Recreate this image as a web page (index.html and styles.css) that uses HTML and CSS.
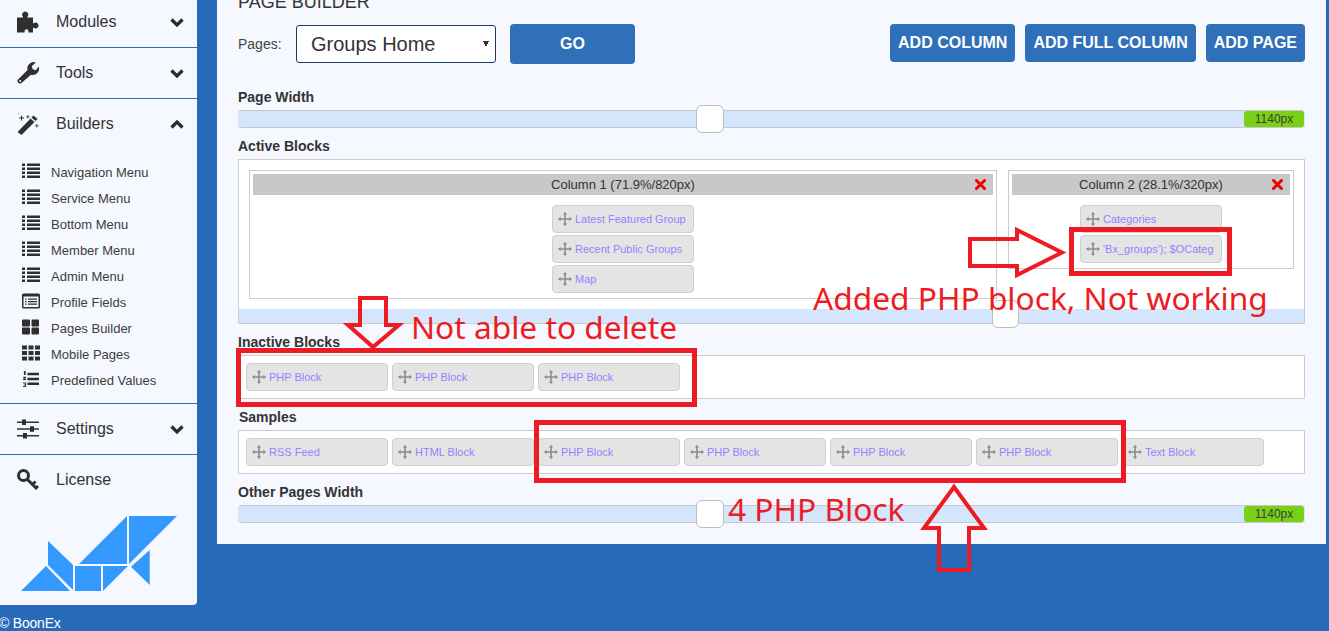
FILE: index.html
```html
<!DOCTYPE html>
<html lang="en">
<head>
  <meta charset="UTF-8" />
  <title>Page Builder</title>
  <link rel="stylesheet" href="styles.css">
</head>
<body>

  <svg class="defs" xmlns="http://www.w3.org/2000/svg">
    <symbol id="i-puzzle" viewBox="0 0 22 21">
      <path d="M0 6h6V5.200a3 3 0 1 1 4.400 0V6H16v5.800h.9a2.800 2.800 0 1 1 0 4.400H16V21h-4.600v-1.400a1.900 1.900 0 0 0-3.800 0V21H0z"/>
    </symbol>
    <symbol id="i-wrench" viewBox="0 0 22 22">
      <path d="M1 17.500 10.500 8a6.400 6.400 0 0 1 8.300-7.500L14.700 4.300l1 3 3.200.9 2.800-3.800a6.400 6.400 0 0 1-7.800 8.300L4.500 21a2.500 2.500 0 0 1-3.500-3.500z"/>
      <circle cx="3.200" cy="19" r="1" fill="#f5f8fe"/>
    </symbol>
    <symbol id="i-wand" viewBox="0 0 22 22">
      <path d="M.5 19 16.500 2.500l4 3.500-16 16z"/>
      <path d="m13.500 5.500 4 3.500 1-1-4-3.500z" fill="#f5f8fe"/>
      <path d="M4 2.500h1v2h2v1H5v2H4v-2H2v-1h2zM10.500 2h.8v1.400h1.400v.8h-1.400v1.400h-.8V4.200H9.100v-.8h1.400zM19.500 11h.8v1.400h1.400v.8h-1.400v1.400h-.8v-1.400h-1.400v-.8h1.400zM1 .5h.8v.8H1z"/>
    </symbol>
    <symbol id="i-list" viewBox="0 0 18 15">
      <path d="M0 0h3v2.600H0zM5 0h13v2.600H5zM0 4h3v2.600H0zM5 4h13v2.600H5zM0 8h3v2.600H0zM5 8h13v2.600H5zM0 12h3v2.600H0zM5 12h13v2.600H5z"/>
    </symbol>
    <symbol id="i-listalt" viewBox="0 0 18 15">
      <path fill-rule="evenodd" d="M1.500 0h15A1.500 1.500 0 0 1 18 1.500v12a1.500 1.500 0 0 1-1.500 1.500h-15A1.500 1.500 0 0 1 0 13.500v-12A1.500 1.500 0 0 1 1.500 0zM1.500 3v10.500h15V3z"/>
      <path d="M3 5h1.500v1.200H3zM6 5h9v1.200H6zM3 7.500h1.500v1.200H3zM6 7.500h9v1.200H6zM3 10h1.500v1.200H3zM6 10h9v1.200H6z"/>
    </symbol>
    <symbol id="i-thlarge" viewBox="0 0 18 15">
      <path d="M0 1a1 1 0 0 1 1-1h6a1 1 0 0 1 1 1v5a1 1 0 0 1-1 1H1a1 1 0 0 1-1-1zM9.500 1a1 1 0 0 1 1-1h5.500a1 1 0 0 1 1 1v5a1 1 0 0 1-1 1h-5.500a1 1 0 0 1-1-1zM0 9a1 1 0 0 1 1-1h6a1 1 0 0 1 1 1v5a1 1 0 0 1-1 1H1a1 1 0 0 1-1-1zM9.500 9a1 1 0 0 1 1-1h5.500a1 1 0 0 1 1 1v5a1 1 0 0 1-1 1h-5.500a1 1 0 0 1-1-1z"/>
    </symbol>
    <symbol id="i-th" viewBox="0 0 18 15">
      <path d="M0 0h5v4H0zM6.500 0h5v4h-5zM13 0h5v4h-5zM0 5.500h5v4H0zM6.500 5.500h5v4h-5zM13 5.500h5v4h-5zM0 11h5v4H0zM6.500 11h5v4h-5zM13 11h5v4h-5z"/>
    </symbol>
    <symbol id="i-listol" viewBox="0 0 18 18">
      <path d="M1 0h2v4.500H1zM0 6.500h3.500v1.200L1.800 9h1.700v1.200H0V9l1.800-1.300H0zM0 13h3.500v5H0v-1h2.300v-.9H.8v-1h1.500v-.9H0zM5 2h13v2.800H5zM5 7.500h13v2.800H5zM5 13h13v2.800H5z"/>
    </symbol>
    <symbol id="i-sliders" viewBox="0 0 22 20">
      <path d="M0 2.500h22v1.400H0zM0 9.300h22v1.400H0zM0 16.100h22v1.400H0z"/>
      <path d="M5 .5h4v5.500H5zM13 7.200h4v5.500h-4zM6 14h4v5.500H6z"/>
    </symbol>
    <symbol id="i-key" viewBox="0 0 22 22">
      <circle cx="6.500" cy="6.500" r="5" fill="none" stroke="#2f2f2f" stroke-width="3"/>
      <path d="M10 10 20 20M15.500 15.500l3-3M19 19l2-2" fill="none" stroke="#2f2f2f" stroke-width="3"/>
    </symbol>
    <symbol id="i-move" viewBox="0 0 14 14">
      <path d="M7 0l2.200 2.600H7.800v3.600h3.600V4.800L14 7l-2.600 2.200V7.800H7.800v3.600h1.400L7 14l-2.200-2.600h1.400V7.800H2.600v1.400L0 7l2.600-2.200v1.400h3.600V2.600H4.800z"/>
    </symbol>
    <symbol id="i-close" viewBox="0 0 11 11">
      <path d="M1.500 1.500l8 8M9.500 1.500l-8 8" fill="none" stroke="#f00000" stroke-width="3" stroke-linecap="round"/>
    </symbol>
  </svg>

  <div class="app">
    <div class="side-col">
      <aside class="sidebar">
        <a class="nav-row">
          <svg class="nav-icon"><use href="#i-puzzle"/></svg>
          <span>Modules</span>
          <svg class="chevron" viewBox="0 0 14 9"><path d="M1.500 1.500 7 7l5.500-5.500"/></svg>
        </a>
        <a class="nav-row">
          <svg class="nav-icon"><use href="#i-wrench"/></svg>
          <span>Tools</span>
          <svg class="chevron" viewBox="0 0 14 9"><path d="M1.500 1.500 7 7l5.500-5.500"/></svg>
        </a>
        <div class="nav-group">
          <a class="nav-row nav-open">
            <svg class="nav-icon"><use href="#i-wand"/></svg>
            <span>Builders</span>
            <svg class="chevron" viewBox="0 0 14 9"><path d="M1.500 7.500 7 2l5.500 5.500"/></svg>
          </a>
          <ul class="sub-menu">
            <li><svg class="sub-icon"><use href="#i-list"/></svg>Navigation Menu</li>
            <li><svg class="sub-icon"><use href="#i-list"/></svg>Service Menu</li>
            <li><svg class="sub-icon"><use href="#i-list"/></svg>Bottom Menu</li>
            <li><svg class="sub-icon"><use href="#i-list"/></svg>Member Menu</li>
            <li><svg class="sub-icon"><use href="#i-list"/></svg>Admin Menu</li>
            <li><svg class="sub-icon"><use href="#i-listalt"/></svg>Profile Fields</li>
            <li><svg class="sub-icon"><use href="#i-thlarge"/></svg>Pages Builder</li>
            <li><svg class="sub-icon"><use href="#i-th"/></svg>Mobile Pages</li>
            <li><svg class="sub-icon"><use href="#i-listol"/></svg>Predefined Values</li>
          </ul>
        </div>
        <a class="nav-row">
          <svg class="nav-icon"><use href="#i-sliders"/></svg>
          <span>Settings</span>
          <svg class="chevron" viewBox="0 0 14 9"><path d="M1.500 1.500 7 7l5.500-5.500"/></svg>
        </a>
        <a class="nav-row nav-last">
          <svg class="nav-icon"><use href="#i-key"/></svg>
          <span>License</span>
        </a>
        <svg class="logo" viewBox="0 0 156 75">
          <path d="M106 0v48H58zM108 0h48l-48 48zM128.700 34v35L110 50.700zM54 50h26v25H54zM82 50h25L82 75zM27 25l25 24v25L27 49zM25 50l24 25H0z"/>
        </svg>
      </aside>
      <div class="copyright">© BoonEx</div>
    </div>

    <main class="panel">
      <div class="panel-title">PAGE BUILDER</div>

      <div class="toolbar">
        <label class="pages-label">Pages:</label>
        <select class="pages-select">
          <option>Groups Home</option>
        </select>
        <button class="btn btn-go">GO</button>
        <div class="toolbar-right">
          <button class="btn">ADD COLUMN</button>
          <button class="btn">ADD FULL COLUMN</button>
          <button class="btn">ADD PAGE</button>
        </div>
      </div>

      <div class="field-label">Page Width</div>
      <div class="slider">
        <span class="slider-handle"></span>
        <span class="slider-value">1140px</span>
      </div>

      <div class="field-label">Active Blocks</div>
      <div class="active-box">
        <div class="columns">
          <div class="column column-wide">
            <div class="column-head">Column 1 (71.9%/820px)<svg class="close"><use href="#i-close"/></svg></div>
            <div class="column-body">
              <div class="block"><svg class="move"><use href="#i-move"/></svg>Latest Featured Group</div>
              <div class="block"><svg class="move"><use href="#i-move"/></svg>Recent Public Groups</div>
              <div class="block"><svg class="move"><use href="#i-move"/></svg>Map</div>
            </div>
          </div>
          <div class="column column-narrow">
            <div class="column-head">Column 2 (28.1%/320px)<svg class="close"><use href="#i-close"/></svg></div>
            <div class="column-body">
              <div class="block"><svg class="move"><use href="#i-move"/></svg>Categories</div>
              <div class="block"><svg class="move"><use href="#i-move"/></svg>'Bx_groups'); $OCateg</div>
            </div>
          </div>
        </div>
        <div class="active-strip"><span class="strip-handle"></span></div>
      </div>

      <div class="field-label">Inactive Blocks</div>
      <div class="block-row">
        <div class="block"><svg class="move"><use href="#i-move"/></svg>PHP Block</div>
        <div class="block"><svg class="move"><use href="#i-move"/></svg>PHP Block</div>
        <div class="block"><svg class="move"><use href="#i-move"/></svg>PHP Block</div>
      </div>

      <div class="field-label label-samples">Samples</div>
      <div class="block-row">
        <div class="block"><svg class="move"><use href="#i-move"/></svg>RSS Feed</div>
        <div class="block"><svg class="move"><use href="#i-move"/></svg>HTML Block</div>
        <div class="block"><svg class="move"><use href="#i-move"/></svg>PHP Block</div>
        <div class="block"><svg class="move"><use href="#i-move"/></svg>PHP Block</div>
        <div class="block"><svg class="move"><use href="#i-move"/></svg>PHP Block</div>
        <div class="block"><svg class="move"><use href="#i-move"/></svg>PHP Block</div>
        <div class="block"><svg class="move"><use href="#i-move"/></svg>Text Block</div>
      </div>

      <div class="field-label">Other Pages Width</div>
      <div class="slider">
        <span class="slider-handle"></span>
        <span class="slider-value">1140px</span>
      </div>
    </main>
  </div>

  <!-- red notes drawn on top of the screenshot -->
  <svg class="notes" viewBox="0 0 1329 631">
    <rect class="note-box" x="238.500" y="350.500" width="456" height="54"/>
    <rect class="note-box" x="536.500" y="422.500" width="587" height="58"/>
    <rect class="note-box" x="1071.500" y="229.500" width="158" height="44"/>
    <path d="M970 239h47v-9l45 22.500-45 22.500v-9h-47z"/>
    <path d="M360 298h26v27h13l-26 22-25-22h12z"/>
    <path d="M954 487l30 41h-15v42h-30v-42h-15z"/>
  </svg>
  <span class="note note-delete">Not able to delete</span>
  <span class="note note-added">Added PHP block, Not working</span>
  <span class="note note-four">4 PHP Block</span>

</body>
</html>
```

FILE: styles.css
```css
* {
  box-sizing: border-box;
}

html,
body {
  height: 631px;
  overflow: hidden;
}

body {
  margin: 0;
  position: relative;
  background: #286aba;
  color: #333;
  font-family: "Liberation Sans", Arial, sans-serif;
}

.defs {
  display: none;
}

.app {
  display: flex;
  align-items: flex-start;
}

/* sidebar */
.side-col {
  width: 197px;
  flex: none;
  margin-top: -3px;
}

.sidebar {
  height: 608px;
  background: #f5f8fe;
  border-radius: 0 0 4px 0;
}

.nav-row {
  display: flex;
  align-items: center;
  height: 51px;
  padding: 0 13px 1px 17px;
  border-bottom: 1px solid #2a6ebb;
  font-size: 16px;
  color: #333;
}

.nav-open {
  height: 50px;
  border-bottom: none;
}

.nav-last {
  border-bottom: none;
}

.nav-icon {
  width: 22px;
  height: 22px;
  margin-right: 17px;
  fill: #2f2f2f;
}

.chevron {
  width: 14px;
  height: 9px;
  margin-left: auto;
  margin-top: 2px;
  fill: none;
  stroke: #2b2b2b;
  stroke-width: 3.2;
}

.nav-group {
  border-bottom: 1px solid #2a6ebb;
}

.sub-menu {
  list-style: none;
  margin: 0;
  padding: 10px 0 10px 22px;
}

.sub-menu li {
  display: flex;
  align-items: center;
  height: 26px;
  font-size: 13px;
  color: #3d3d3d;
}

.sub-icon {
  width: 18px;
  height: 16px;
  margin-right: 11px;
  margin-top: -2px;
  fill: #2f2f2f;
}

.logo {
  display: block;
  width: 156px;
  height: 75px;
  margin: 10px 0 0 21px;
  fill: #3399ff;
}

.copyright {
  margin: 10px 0 0 -1px;
  font-size: 14px;
  line-height: 16px;
  letter-spacing: -0.2px;
  color: #fff;
}

/* main panel */
.panel {
  flex: none;
  width: 1109px;
  height: 544px;
  margin: 0 0 0 20px;
  padding: 0 21px;
  background: #f5f8fe;
}

.panel-title {
  height: 24px;
  margin-top: -10px;
  padding-top: 3px;
  margin-bottom: 10px;
  font-size: 18px;
  line-height: 18px;
  color: #333;
}

.toolbar {
  display: flex;
  align-items: flex-start;
  height: 40px;
  margin-bottom: 25px;
}

.pages-label {
  width: 58px;
  font-size: 14px;
  line-height: 40px;
  color: #444;
}

/* native arrow is a chevron here, the small triangle is two gradients */
.pages-select {
  appearance: none;
  width: 200px;
  height: 38px;
  margin-top: 1px;
  padding: 0 0 0 14px;
  background-color: #fff;
  background-image:
    linear-gradient(63deg, transparent 50%, #333 50%),
    linear-gradient(-63deg, transparent 50%, #333 50%);
  background-size: 3px 6px;
  background-position: 186px 15px, 189px 15px;
  background-repeat: no-repeat;
  border: 1px solid #1c3a5e;
  border-radius: 3px;
  font-family: inherit;
  font-size: 20px;
  color: #333;
}

.btn {
  height: 38px;
  padding: 0 8px;
  background: #2f70b9;
  border: none;
  border-radius: 4px;
  font-family: inherit;
  font-size: 16px;
  font-weight: 700;
  color: #fff;
}

.btn-go {
  width: 125px;
  height: 40px;
  margin-left: 14px;
}

.toolbar-right {
  display: flex;
  gap: 10px;
  margin-left: auto;
}

.field-label {
  height: 16px;
  margin-bottom: 5px;
  font-size: 14px;
  line-height: 16px;
  font-weight: 700;
  color: #333;
}

.label-samples {
  padding-left: 1px;
}

.slider {
  position: relative;
  height: 18px;
  margin-bottom: 10px;
  background: #d4e6fc;
  border: 1px solid #c8c8c8;
  border-width: 1px 0;
  border-radius: 4px;
}

.slider-handle {
  position: absolute;
  left: 458px;
  top: -6px;
  width: 28px;
  height: 28px;
  background: #fff;
  border: 1px solid #bdbdbd;
  border-radius: 6px;
}

.slider-value {
  position: absolute;
  right: 1px;
  top: 0;
  width: 60px;
  height: 16px;
  background: #7ad014;
  border-radius: 3px;
  font-size: 12px;
  line-height: 16px;
  text-align: center;
  color: #3c3c3c;
}

/* blocks */
.active-box {
  margin-bottom: 10px;
  padding: 10px 10px 0;
  background: #fff;
  border: 1px solid #ccc;
}

.columns {
  display: flex;
  align-items: flex-start;
  gap: 11px;
  height: 139px;
}

.column {
  background: #fff;
  border: 1px solid #ccc;
  padding: 3px;
}

.column-wide {
  width: 748px;
}

.column-narrow {
  width: 286px;
}

.column-head {
  position: relative;
  height: 21px;
  background: #c8c8c8;
  font-size: 13px;
  line-height: 21px;
  text-align: center;
  color: #333;
}

.close {
  position: absolute;
  right: 7px;
  top: 5px;
  width: 11px;
  height: 11px;
}

.column-body {
  display: flex;
  flex-direction: column;
  align-items: center;
  gap: 2px;
  padding: 10px 0 2px;
}

.block {
  display: flex;
  align-items: center;
  flex: none;
  width: 142px;
  height: 28px;
  padding-left: 5px;
  background: #e4e4e4;
  border: 1px solid #cfcfcf;
  border-radius: 4px;
  font-size: 11px;
  white-space: nowrap;
  overflow: hidden;
  color: #9980ff;
}

.move {
  flex: none;
  width: 14px;
  height: 14px;
  margin-right: 3px;
  fill: #8c8c8c;
}

.active-strip {
  position: relative;
  height: 14px;
  margin: 0 -10px;
  background: #d4e6fc;
}

.strip-handle {
  position: absolute;
  left: 753px;
  top: -9px;
  width: 27px;
  height: 28px;
  background: #fff;
  border: 1px solid #bdbdbd;
  border-radius: 6px;
}

.block-row {
  display: flex;
  gap: 4px;
  height: 44px;
  margin-bottom: 10px;
  padding: 7px;
  background: #fff;
  border: 1px solid #ccc;
}

/* notes */
.notes {
  position: absolute;
  left: 0;
  top: 0;
  width: 1329px;
  height: 631px;
  fill: none;
  stroke: #ed1c24;
  stroke-width: 4;
  pointer-events: none;
}

.note-box {
  stroke-width: 5;
}

.note {
  position: absolute;
  font-family: "Noto Sans", sans-serif;
  font-size: 31.7px;
  line-height: 40px;
  white-space: nowrap;
  color: #ed1c24;
}

.note-delete {
  left: 411px;
  top: 307px;
}

.note-added {
  left: 813px;
  top: 278px;
}

.note-four {
  left: 728px;
  top: 489px;
}
```
